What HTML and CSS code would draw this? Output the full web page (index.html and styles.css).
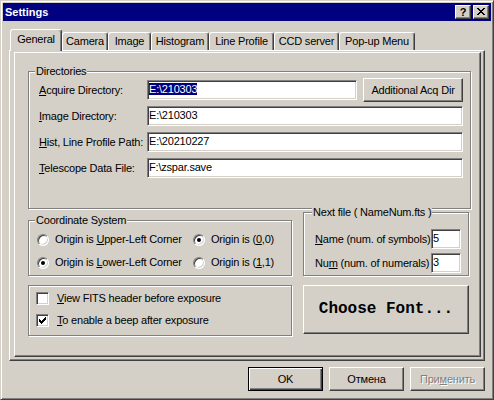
FILE: index.html
```html
<!DOCTYPE html>
<html>
<head>
<meta charset="utf-8">
<title>Settings</title>
<link rel="stylesheet" href="styles.css">
</head>
<body>
<div class="window">
  <div class="titlebar">
    <span class="title">Settings</span>
    <div class="caption-btns">
      <span class="cap-btn help">?</span>
      <span class="cap-btn close"><svg width="8" height="7" viewBox="0 0 8 7" shape-rendering="crispEdges"><path d="M0 0h2v1H0z M6 0h2v1H6z M1 1h2v1H1z M5 1h2v1H5z M2 2h4v1H2z M3 3h2v1H3z M2 4h4v1H2z M1 5h2v1H1z M5 5h2v1H5z M0 6h2v1H0z M6 6h2v1H6z" fill="#000"/></svg></span>
    </div>
  </div>

  <div class="tabs">
    <div class="tab active t-general">General</div>
    <div class="tab t-camera">Camera</div>
    <div class="tab t-image">Image</div>
    <div class="tab t-hist">Histogram</div>
    <div class="tab t-line">Line Profile</div>
    <div class="tab t-ccd">CCD server</div>
    <div class="tab t-popup">Pop-up Menu</div>
  </div>

  <div class="panel">
    <div class="page">
      <div class="group dirs">
        <div class="group-title">Directories</div>
        <div class="dir-grid">
          <div class="lbl"><u>A</u>cquire Directory:</div>
          <div class="field"><span class="sel">E:\210303</span></div>
          <div class="btn acq">Additional Acq Dir</div>

          <div class="lbl"><u>I</u>mage Directory:</div>
          <div class="field span2">E:\210303</div>

          <div class="lbl"><u>H</u>ist, Line Profile Path:</div>
          <div class="field span2">E:\20210227</div>

          <div class="lbl"><u>T</u>elescope Data File:</div>
          <div class="field span2">F:\zspar.save</div>
        </div>
      </div>

      <div class="lower">
        <div class="group coord">
          <div class="group-title">Coordinate System</div>
          <div class="radio-grid">
            <div class="opt"><span class="radio"></span><span>Origin is <u>U</u>pper-Left Corner</span></div>
            <div class="opt"><span class="radio on"></span><span>Origin is (<u>0</u>,0)</span></div>
            <div class="opt"><span class="radio on"></span><span>Origin is <u>L</u>ower-Left Corner</span></div>
            <div class="opt"><span class="radio"></span><span>Origin is (<u>1</u>,1)</span></div>
          </div>
        </div>

        <div class="group nextfile">
          <div class="group-title">Next file ( NameNum.fts )</div>
          <div class="nf-rows">
            <div class="nf-row"><span><u>N</u>ame (num. of symbols)</span><div class="field small">5</div></div>
            <div class="nf-row"><span>Nu<u>m</u> (num. of numerals)</span><div class="field small">3</div></div>
          </div>
        </div>

        <div class="group checks">
          <div class="chk-rows">
            <div class="opt chk-opt"><span class="check"></span><span><u>V</u>iew FITS header before exposure</span></div>
            <div class="opt chk-opt"><span class="check"><svg width="11" height="11" viewBox="0 0 11 11" shape-rendering="crispEdges"><path d="M8 2h1v1h-1z M7 3h2v1h-2z M2 4h1v1h-1z M6 4h3v1h-3z M2 5h2v1h-2z M5 5h3v1h-3z M2 6h5v1h-5z M3 7h3v1h-3z M4 8h1v1h-1z" fill="#000"/></svg></span><span><u>T</u>o enable a beep after exposure</span></div>
          </div>
        </div>

        <div class="btn font-btn">Choose Font...</div>
      </div>
    </div>
  </div>

  <div class="footer">
    <div class="btn default">OK</div>
    <div class="btn">Отмена</div>
    <div class="btn disabled">При<u>м</u>енить</div>
  </div>
</div>
</body>
</html>
```

FILE: styles.css
```css
* { box-sizing: border-box; }

html, body {
  margin: 0;
  padding: 0;
}

body {
  background: #d4d0c8;
  font-family: "Liberation Sans", Arial, sans-serif;
  font-size: 11px;
  line-height: 13px;
  letter-spacing: -0.2px;
  color: #000;
}

u { text-decoration: underline; text-underline-offset: 1px; }

.window {
  width: 494px;
  height: 400px;
  border: 1px solid;
  border-color: #d4d0c8 #404040 #404040 #d4d0c8;
  box-shadow: inset 1px 1px 0 #fff, inset -1px -1px 0 #808080;
  padding: 2px;
  display: flex;
  flex-direction: column;
}

/* title bar */
.titlebar {
  height: 18px;
  background: #000080;
  display: flex;
  align-items: center;
  justify-content: space-between;
  padding: 0 2px 0 2px;
  flex: none;
}
.title {
  color: #fff;
  font-weight: bold;
  letter-spacing: 0;
}
.caption-btns {
  display: flex;
  gap: 2px;
}
.cap-btn {
  width: 16px;
  height: 14px;
  background: #d4d0c8;
  border: 1px solid;
  border-color: #fff #404040 #404040 #fff;
  box-shadow: inset -1px -1px 0 #808080;
  display: flex;
  align-items: center;
  justify-content: center;
  font-weight: bold;
  font-size: 11px;
  line-height: 12px;
  letter-spacing: 0;
}
.cap-btn svg { display: block; }
.help { padding-bottom: 1px; }
.close { padding: 0 1px 1px 0; }

/* tabs */
.tabs {
  display: flex;
  align-items: flex-end;
  height: 21px;
  margin: 8px 0 0 7px;
  flex: none;
}
.tab {
  height: 18px;
  border: 1px solid;
  border-bottom: none;
  border-color: #fff #404040 transparent #fff;
  box-shadow: inset -1px 0 0 #808080;
  border-radius: 3px 3px 0 0;
  text-align: center;
  line-height: 17px;
  white-space: nowrap;
}
.tab.active {
  height: 22px;
  margin-bottom: -1px;
  position: relative;
  z-index: 1;
  background: #d4d0c8;
  line-height: 18px;
}
.t-general { width: 52px; }
.t-camera { width: 46px; }
.t-image { width: 43px; }
.t-hist { width: 58px; }
.t-line { width: 65px; }
.t-ccd { width: 65px; }
.t-popup { width: 76px; }

/* panel + page */
.panel {
  height: 311px;
  margin: 0 6px;
  border: 1px solid;
  border-color: #fff #404040 #404040 #fff;
  box-shadow: inset -1px -1px 0 #808080;
  padding: 1px 3px 3px 4px;
  flex: none;
}
.page {
  height: 100%;
  border: 1px solid;
  border-color: #fff #404040 #404040 #fff;
  box-shadow: inset -1px -1px 0 #808080;
  padding: 18px 9px 0 13px;
}

/* group boxes */
.group {
  border: 1px solid #808080;
  box-shadow: inset 1px 1px 0 #fff, 1px 1px 0 #fff;
}
.group-title {
  width: fit-content;
  margin: -7px 0 0 6px;
  padding: 0 1px;
  background: #d4d0c8;
  line-height: 13px;
  white-space: nowrap;
}

.dirs { padding-bottom: 30px; }
.dir-grid {
  display: grid;
  grid-template-columns: 108px 210px 1fr;
  grid-auto-rows: 20px;
  row-gap: 6px;
  align-items: center;
  margin: 2px 7px 0 10px;
}
.lbl { white-space: nowrap; }

.field {
  height: 20px;
  background: #fff;
  border: 1px solid;
  border-color: #808080 #fff #fff #808080;
  box-shadow: inset 1px 1px 0 #404040, inset -1px -1px 0 #d4d0c8;
  padding: 0 1px;
  line-height: 17px;
  white-space: nowrap;
  overflow: hidden;
}
.span2 { grid-column: 2 / 4; }
.sel {
  background: #000080;
  color: #fff;
}

/* buttons */
.btn {
  background: #d4d0c8;
  border: 1px solid;
  border-color: #fff #404040 #404040 #fff;
  box-shadow: inset -1px -1px 0 #808080;
  display: flex;
  align-items: center;
  justify-content: center;
  white-space: nowrap;
}
.acq {
  align-self: stretch;
  margin: -2px 0 -2px 6px;
}

/* lower area */
.lower {
  display: grid;
  grid-template-columns: 264px 166px;
  column-gap: 11px;
  row-gap: 9px;
  margin-top: 3px;
}
.coord { align-self: end; padding-bottom: 1px; }
.radio-grid {
  display: grid;
  grid-template-columns: 156px 1fr;
  grid-auto-rows: 23px;
  align-items: center;
  margin: 1px 0 0 8px;
}
.opt {
  display: flex;
  align-items: center;
  gap: 6px;
  white-space: nowrap;
}
.radio {
  width: 12px;
  height: 12px;
  flex: none;
  border-radius: 50%;
  border: 1px solid;
  border-color: #808080 #fff #fff #808080;
  box-shadow: inset 1px 1px 0 #404040, inset -1px -1px 0 #d4d0c8;
  background: #fff;
  display: flex;
  align-items: center;
  justify-content: center;
}
.radio.on::after {
  content: "";
  width: 4px;
  height: 4px;
  border-radius: 50%;
  background: #000;
}

.nextfile { padding-bottom: 2px; }
.nextfile .group-title { margin-left: 8px; }
.nf-rows {
  display: flex;
  flex-direction: column;
  gap: 4px;
  margin: 10px 7px 0 11px;
}
.nf-row {
  height: 20px;
  display: flex;
  align-items: center;
  justify-content: space-between;
  white-space: nowrap;
}
.field.small { width: 30px; }

.checks { align-self: start; padding: 6px 0 8px 7px; }
.chk-rows {
  display: flex;
  flex-direction: column;
  gap: 9px;
}
.chk-opt { height: 13px; gap: 8px; }
.check {
  width: 13px;
  height: 13px;
  flex: none;
  border: 1px solid;
  border-color: #808080 #fff #fff #808080;
  box-shadow: inset 1px 1px 0 #404040, inset -1px -1px 0 #d4d0c8;
  background: #fff;
}
.check svg { display: block; }

.font-btn {
  align-self: start;
  height: 49px;
  font-family: "Liberation Mono", "Courier New", monospace;
  font-weight: bold;
  font-size: 16px;
  letter-spacing: 0;
}

/* footer */
.footer {
  display: flex;
  justify-content: flex-end;
  gap: 6px;
  margin: 6px 6px 0 0;
}
.footer .btn {
  width: 75px;
  height: 24px;
}
.footer .btn.default {
  border: 1px solid #000;
  box-shadow: inset 1px 1px 0 #fff, inset -1px -1px 0 #404040, inset -2px -2px 0 #808080;
}
.btn.disabled {
  color: #808080;
  text-shadow: 1px 1px 0 #fff;
}
```
